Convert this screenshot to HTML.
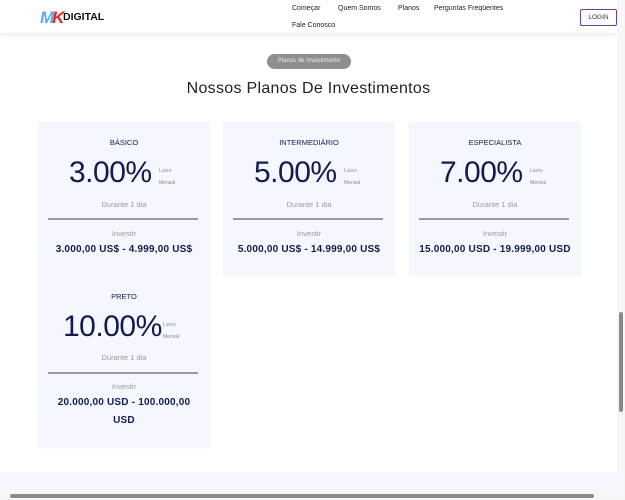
<!DOCTYPE html>
<html><head><meta charset="utf-8"><style>
*{margin:0;padding:0;box-sizing:border-box}
body{width:625px;height:500px;overflow:hidden;background:#fff;font-family:"Liberation Sans",sans-serif;position:relative}
.hdr{position:absolute;left:0;top:0;width:617px;height:33px;background:#fff;box-shadow:0 2px 5px rgba(0,0,0,.08)}
.abs{position:absolute;white-space:nowrap}
.nav{font-size:7px;color:#222}
.card{position:absolute;width:172px;background:#f4f8fe;box-shadow:0 1px 3px rgba(0,0,0,.04);text-align:center;color:#141a4e}
.card .t{position:absolute;left:0;right:0;font-size:7.5px}
.card .p{position:absolute;font-size:30px;letter-spacing:-0.5px}
.card .l{position:absolute;font-size:5px;color:#888;line-height:12px;text-align:left}
.card .d{position:absolute;left:0;right:0;font-size:7.5px;color:#999}
.card .hr{position:absolute;left:10px;right:12px;height:1.5px;background:#9a9a9a}
.card .r{position:absolute;left:0;right:0;font-size:10px;font-weight:bold;line-height:18px;letter-spacing:0.2px}
</style></head><body>
<div class="hdr">
 <div class="abs" style="left:40px;top:8px;font-size:17px;font-weight:bold;font-style:italic;letter-spacing:-2px"><span style="color:#5aa9f5">M</span><span style="color:#e8202a">K</span></div>
 <div class="abs" style="left:63px;top:11px;font-size:10.5px;font-weight:bold;color:#111">DIGITAL</div>
 <div class="abs nav" style="left:292px;top:4px;top:5px">Começar</div>
 <div class="abs nav" style="left:338px;top:5px">Quem Somos</div>
 <div class="abs nav" style="left:398px;top:5px">Planos</div>
 <div class="abs nav" style="left:434px;top:5px">Perguntas Freqüentes</div>
 <div class="abs nav" style="left:292px;top:22px">Fale Conosco</div>
 <div class="abs" style="left:580px;top:9px;width:37px;height:17px;border:1px solid #6a3fa0;border-radius:2px;font-size:6.5px;color:#333;text-align:center;line-height:15px">LOGIN</div>
</div>
<div class="abs" style="left:267px;top:54px;width:84px;height:15px;background:#8e8e8e;border-radius:8px;color:#eee;font-size:6px;text-align:center;line-height:15px">Planos de Investimento</div>
<div class="abs" style="left:0;width:617px;top:80px;text-align:center;font-size:16px;color:#222;letter-spacing:0.3px">Nossos Planos De Investimentos</div>

<div class="card" style="left:38px;top:122px;height:153px">
 <div class="t" style="top:16px">BÁSICO</div>
 <div class="p" style="left:31px;top:34px">3.00%</div>
 <div class="l" style="left:121px;top:43px">Lucro<br>Mensal</div>
 <div class="d" style="top:78px">Durante 1 dia</div>
 <div class="hr" style="top:96px"></div>
 <div class="d" style="top:107px">Investir</div>
 <div class="r" style="top:119px">3.000,00 US$ - 4.999,00 US$</div>
</div>
<div class="card" style="left:223px;top:122px;height:153px">
 <div class="t" style="top:16px">INTERMEDIÁRIO</div>
 <div class="p" style="left:31px;top:34px">5.00%</div>
 <div class="l" style="left:121px;top:43px">Lucro<br>Mensal</div>
 <div class="d" style="top:78px">Durante 1 dia</div>
 <div class="hr" style="top:96px"></div>
 <div class="d" style="top:107px">Investir</div>
 <div class="r" style="top:119px">5.000,00 US$ - 14.999,00 US$</div>
</div>
<div class="card" style="left:409px;top:122px;height:153px">
 <div class="t" style="top:16px">ESPECIALISTA</div>
 <div class="p" style="left:31px;top:34px">7.00%</div>
 <div class="l" style="left:121px;top:43px">Lucro<br>Mensal</div>
 <div class="d" style="top:78px">Durante 1 dia</div>
 <div class="hr" style="top:96px"></div>
 <div class="d" style="top:107px">Investir</div>
 <div class="r" style="top:119px">15.000,00 USD - 19.999,00 USD</div>
</div>
<div class="card" style="left:38px;top:276px;height:171px">
 <div class="t" style="top:16px">PRETO</div>
 <div class="p" style="left:25px;top:34px">10.00%</div>
 <div class="l" style="left:125px;top:43px">Lucro<br>Mensal</div>
 <div class="d" style="top:77px">Durante 1 dia</div>
 <div class="hr" style="top:96px"></div>
 <div class="d" style="top:106px">Investir</div>
 <div class="r" style="top:118px">20.000,00 USD - 100.000,00<br>USD</div>
</div>

<div class="abs" style="left:0;top:472px;width:617px;height:19px;background:#f4f8fe"></div>
<div class="abs" style="left:617px;top:0;width:8px;height:500px;background:#f6f6f6"></div>
<div class="abs" style="left:619px;top:312px;width:4px;height:100px;background:#8a8a8a;border-radius:2px"></div>
<div class="abs" style="left:0;top:491px;width:617px;height:9px;background:#f6f6f6"></div>
<div class="abs" style="left:10px;top:494px;width:584px;height:4px;background:#8a8a8a;border-radius:2px"></div>
</body></html>
